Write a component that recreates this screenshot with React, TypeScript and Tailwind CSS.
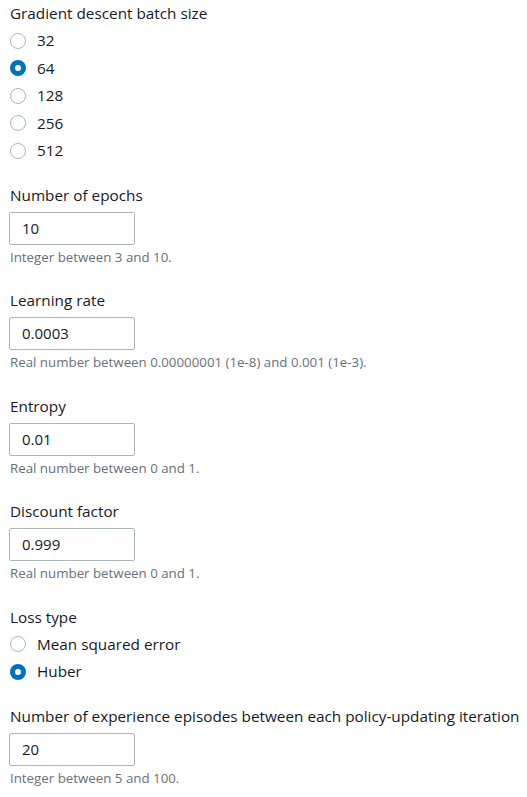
import React from 'react';

type Option = { label: string; checked?: boolean };

function Radio({ label, checked }: Option) {
  return (
    <div className="flex items-center h-[27.5px]">
      {checked ? (
        <span className="w-[16px] h-[16px] rounded-full bg-[#0073bb] flex items-center justify-center shrink-0">
          <span className="w-[6px] h-[6px] rounded-full bg-white" />
        </span>
      ) : (
        <span className="w-[16px] h-[16px] rounded-full border-[1.5px] border-[#aab7b8] bg-white shrink-0" />
      )}
      <span className="ml-[11px] text-[15.3px] text-[#16191f]">{label}</span>
    </div>
  );
}

function RadioGroup({ title, options }: { title: string; options: Option[] }) {
  return (
    <div>
      <div className="text-[15.3px] leading-[20px] text-[#16191f]">{title}</div>
      <div className="mt-[4px]">
        {options.map(o => (
          <Radio key={o.label} {...o} />
        ))}
      </div>
    </div>
  );
}

function NumberField({ label, value, hint }: { label: string; value: string; hint: string }) {
  return (
    <div>
      <div className="text-[15.3px] leading-[20px] text-[#16191f] whitespace-nowrap">{label}</div>
      <div className="mt-[7px] w-[126px] h-[33px] border border-[#aab7b8] rounded-[2px] flex items-center pl-[12px] text-[15px] text-[#16191f] -ml-px">
        {value}
      </div>
      <div className="mt-[4px] text-[13.3px] leading-[16px] text-[#687078]">{hint}</div>
    </div>
  );
}

export default function App() {
  return (
    <div
      className="w-[527px] h-[797px] bg-white pl-[10px] pt-[3px] flex flex-col"
      style={{ fontFamily: '"Open Sans", sans-serif' }}
    >
      <RadioGroup
        title="Gradient descent batch size"
        options={[{ label: '32' }, { label: '64', checked: true }, { label: '128' }, { label: '256' }, { label: '512' }]}
      />
      <div className="mt-[20px] flex flex-col gap-[25.5px]">
        <NumberField label="Number of epochs" value="10" hint="Integer between 3 and 10." />
        <NumberField label="Learning rate" value="0.0003" hint="Real number between 0.00000001 (1e-8) and 0.001 (1e-3)." />
        <NumberField label="Entropy" value="0.01" hint="Real number between 0 and 1." />
        <NumberField label="Discount factor" value="0.999" hint="Real number between 0 and 1." />
        <div className="-mb-[5px]">
          <RadioGroup title="Loss type" options={[{ label: 'Mean squared error' }, { label: 'Huber', checked: true }]} />
        </div>
        <NumberField
          label="Number of experience episodes between each policy-updating iteration"
          value="20"
          hint="Integer between 5 and 100."
        />
      </div>
    </div>
  );
}
